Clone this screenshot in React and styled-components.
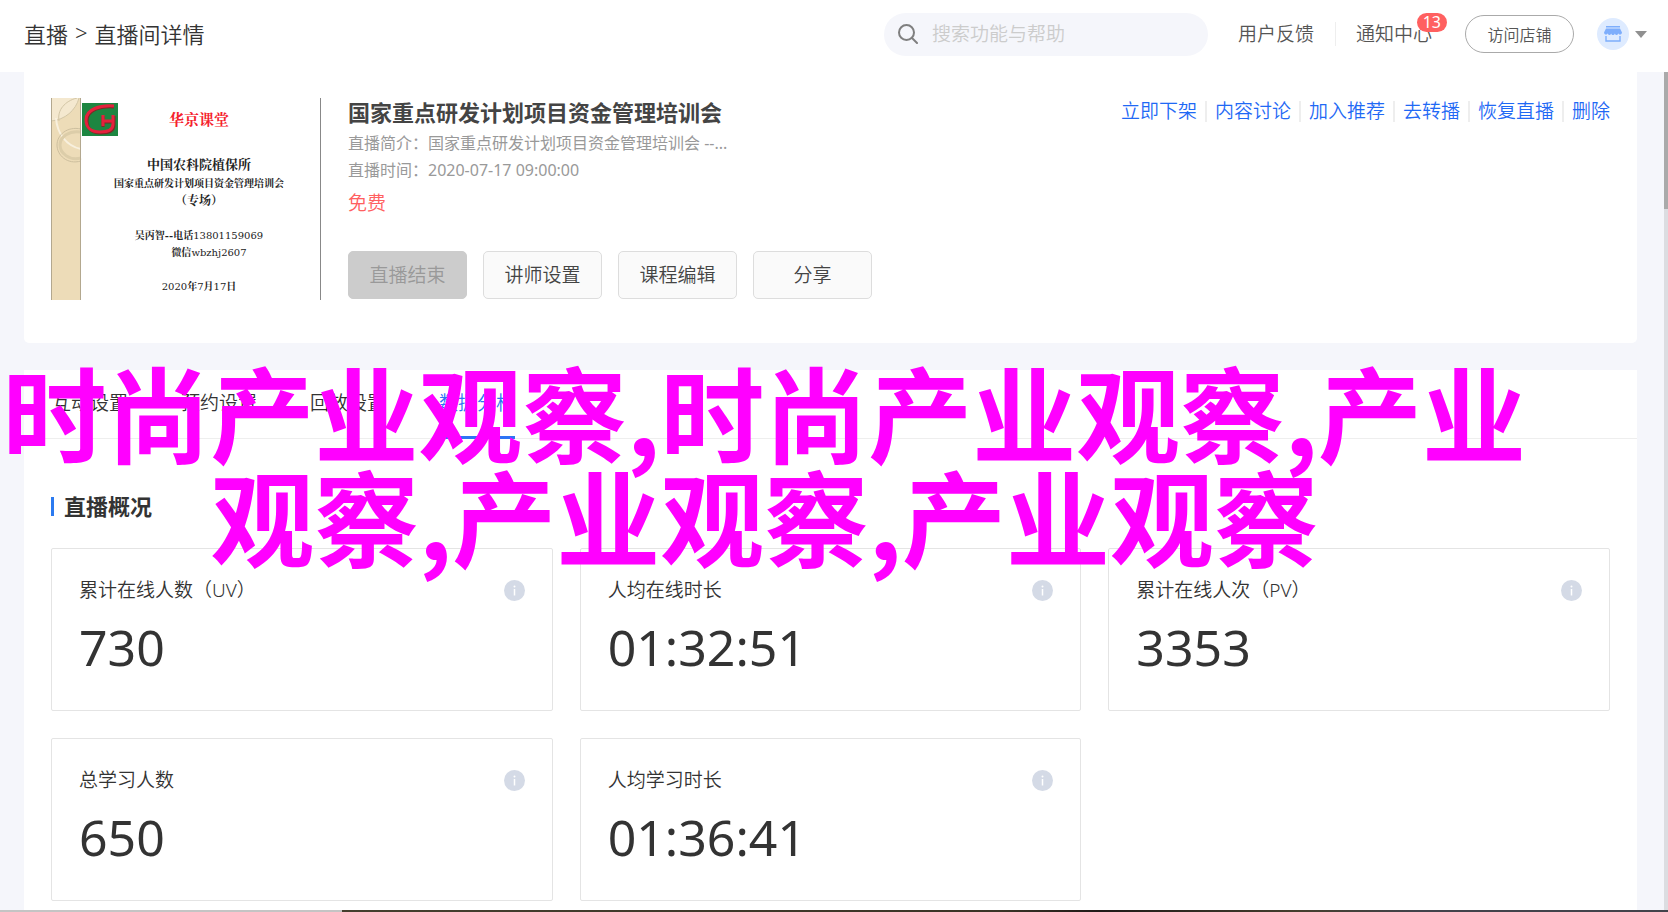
import React from "react";
import styled, { createGlobalStyle } from "styled-components";

const navTabs = ["互动设置", "预约设置", "回放设置", "数据分析"];

const actions = ["立即下架", "内容讨论", "加入推荐", "去转播", "恢复直播", "删除"];

const stats = [
  { label: "累计在线人数（UV）", value: "730" },
  { label: "人均在线时长", value: "01:32:51" },
  { label: "累计在线人次（PV）", value: "3353" },
  { label: "总学习人数", value: "650" },
  { label: "人均学习时长", value: "01:36:41" },
];

const SearchIcon = () => (
  <svg width="20" height="20" viewBox="0 0 20 20" fill="none" stroke="#7f7f7f" strokeWidth="2">
    <circle cx="8.500" cy="8.500" r="7.500" />
    <path d="M14 14l5 5" strokeLinecap="round" />
  </svg>
);

const ShopIcon = () => (
  <svg width="18" height="16" viewBox="0 0 18 16">
    <path d="M2 0h14v1.500H2z" fill="#7eaefc" />
    <path
      d="M2 2.500h14l2 4c0 2-3 3-3.600.8C14 9.500 11.400 9.500 10.800 7.500 10.200 9.500 7.800 9.500 7.200 7.500 6.600 9.500 4 9.500 3.600 7.300 3 9.500 0 8.500 0 6.500z"
      fill="#7eaefc"
    />
    <path d="M2 10v5h14v-5" fill="none" stroke="#7eaefc" strokeWidth="1.400" />
  </svg>
);

const InfoIcon = () => (
  <svg width="21" height="21" viewBox="0 0 21 21">
    <circle cx="10.500" cy="10.500" r="10.500" fill="#d4dae6" />
    <circle cx="10.500" cy="6.500" r="1" fill="#fff" />
    <path d="M10.500 9v6.500" stroke="#fff" strokeWidth="1.500" />
  </svg>
);

const CoverStrip = () => (
  <svg width="31" height="202" viewBox="0 0 31 202">
    <rect width="30" height="202" fill="#eddcb8" />
    <path d="M0 0h28C25 12 14 22 0 23z" fill="#f4e8cf" />
    <path d="M28 0C25 12 14 22 0 23M8 23C6 12 14 3 26 0" fill="none" stroke="#d3c6a6" />
    <path d="M5 20c1 15 10 28 25 31" fill="none" stroke="#f8f0de" strokeWidth="2" />
    <path d="M30 31C16 28 6 37 6 47s10 20 24 16" fill="none" stroke="#cdbf9e" />
    <path d="M30 34C18 32 9 39 9 47s9 16 21 13" fill="none" stroke="#dccda9" strokeWidth="3" />
    <path d="M0.500 0v202M29.500 0v202" stroke="#b3a88f" />
  </svg>
);

const CoverLogo = () => (
  <svg width="36" height="33" viewBox="0 0 36 33">
    <rect width="36" height="33" fill="#1d8641" />
    <path
      d="M32 4C18 3 5 7 5 18c0 8 6 12 14 12 9 0 13-3 13-8V13M21 13v11M21 19h11"
      fill="none"
      stroke="#7c2a26"
      strokeWidth="3"
    />
    <path
      d="M32 3C18 2 4 6 4 17c0 8 6 12 14 12 9 0 13-3 13-8V12M21 12v11M21 18h11"
      fill="none"
      stroke="#e5213c"
      strokeWidth="3"
    />
  </svg>
);

const App = () => {
  return (
    <>
      <GlobalStyle />
      <Page>
        <Header>
          <Breadcrumb>
            <a href="#live">直播</a>
            <span>&gt;</span>
            <span>直播间详情</span>
          </Breadcrumb>
          <Search>
            <SearchIcon />
            <input type="text" placeholder="搜索功能与帮助" aria-label="搜索功能与帮助" />
          </Search>
          <TopLinks>
            <a href="#feedback">用户反馈</a>
            <a href="#notice">
              通知中心
              <Badge>13</Badge>
            </a>
          </TopLinks>
          <VisitButton type="button">访问店铺</VisitButton>
          <Account type="button" aria-label="店铺账号">
            <Avatar>
              <ShopIcon />
            </Avatar>
            <Caret />
          </Account>
        </Header>

        <Content>
          <Main>
            <Course>
              <Cover>
                <CoverStrip />
                <CoverLogo />
                <CoverText>
                  <h2>华京课堂</h2>
                  <h3>中国农科院植保所</h3>
                  <p>国家重点研发计划项目资金管理培训会</p>
                  <h4>（专场）</h4>
                  <CoverContact>
                    <b>吴丙智--电话</b>13801159069
                    <br />
                    &emsp;&emsp;<b>微信</b>wbzhj2607
                  </CoverContact>
                  <CoverDate>
                    2020<b>年</b>7<b>月</b>17<b>日</b>
                  </CoverDate>
                </CoverText>
              </Cover>
              <CourseInfo>
                <h1>国家重点研发计划项目资金管理培训会</h1>
                <Meta>直播简介：国家重点研发计划项目资金管理培训会 --...</Meta>
                <Meta>直播时间：2020-07-17 09:00:00</Meta>
                <Price>免费</Price>
                <ButtonRow>
                  <Button type="button" disabled>
                    直播结束
                  </Button>
                  <Button type="button">讲师设置</Button>
                  <Button type="button">课程编辑</Button>
                  <Button type="button">分享</Button>
                </ButtonRow>
              </CourseInfo>
              <Actions>
                {actions.map((item) => (
                  <a href="#action" key={item}>
                    {item}
                  </a>
                ))}
              </Actions>
            </Course>

            <Panel>
              <Tabs>
                {navTabs.map((tab, i) => (
                  <Tab type="button" key={tab} $active={i === 3}>
                    {tab}
                  </Tab>
                ))}
              </Tabs>
              <SectionTitle>直播概况</SectionTitle>
              <StatGrid>
                {stats.map(({ label, value }) => (
                  <StatCard key={label}>
                    <StatLabel>
                      {label}
                      <InfoIcon />
                    </StatLabel>
                    <StatValue>{value}</StatValue>
                  </StatCard>
                ))}
              </StatGrid>
            </Panel>
          </Main>
          <ScrollTrack>
            <ScrollThumb />
          </ScrollTrack>
        </Content>
        <BottomBar />
        <Caption>时尚产业观察,时尚产业观察,产业观察,产业观察,产业观察</Caption>
      </Page>
    </>
  );
};

const GlobalStyle = createGlobalStyle`
  * {
    box-sizing: border-box;
    margin: 0;
    padding: 0;
  }

  body {
    background: #f5f6fb;
    color: #333;
    font-family: "Noto Sans", "Noto Sans CJK SC", sans-serif;
    font-weight: 350;
    overflow: hidden;
  }

  a {
    color: inherit;
    text-decoration: none;
  }

  button,
  input {
    font: inherit;
    color: inherit;
  }

  button {
    cursor: pointer;
  }

  svg {
    flex: none;
    display: block;
  }
`;

const Page = styled.div`
  position: relative;
  display: flex;
  flex-direction: column;
  height: 100vh;
`;

const Header = styled.header`
  display: flex;
  align-items: center;
  flex: none;
  height: 72px;
  padding: 0 21px 4px 24px;
  background: #fff;
  color: #555;
`;

const Breadcrumb = styled.nav`
  display: flex;
  gap: 7px;
  margin-right: auto;
  padding-bottom: 2px;
  font-size: 22px;
  color: #333;
`;

const Search = styled.label`
  display: flex;
  align-items: center;
  gap: 14px;
  width: 324px;
  height: 43px;
  padding: 0 14px;
  border-radius: 22px;
  background: #f5f6fb;

  input {
    flex: 1;
    min-width: 0;
    border: 0;
    outline: 0;
    background: none;
    font-size: 19px;
  }

  input::placeholder {
    color: #ccc;
  }
`;

const TopLinks = styled.nav`
  display: flex;
  align-items: center;
  margin: 0 12px 0 10px;
  font-size: 19px;

  a {
    position: relative;
    padding: 0 21px 0 20px;
    line-height: 24px;
  }

  a + a {
    border-left: 1px solid #eee;
  }
`;

const Badge = styled.span`
  position: absolute;
  top: -9px;
  right: 6px;
  padding: 0 6px;
  border-radius: 10px;
  background: #ff6060;
  color: #fff;
  font-size: 16px;
  font-weight: 400;
  line-height: 19px;
`;

const VisitButton = styled.button`
  width: 109px;
  height: 38px;
  border: 1px solid #aaa;
  border-radius: 19px;
  background: #fff;
  font-size: 16px;
`;

const Account = styled.button`
  display: flex;
  align-items: center;
  gap: 6px;
  margin-left: 23px;
  border: 0;
  background: none;
`;

const Avatar = styled.span`
  display: flex;
  align-items: center;
  justify-content: center;
  width: 32px;
  height: 32px;
  border-radius: 50%;
  background: #deebff;
`;

const Caret = styled.span`
  border: 6px solid transparent;
  border-top: 7px solid #909090;
  border-bottom: 0;
`;

const Content = styled.div`
  display: flex;
  flex: 1;
  min-height: 0;
`;

const Main = styled.main`
  display: flex;
  flex-direction: column;
  gap: 27px;
  flex: 1;
  min-width: 0;
  padding: 0 27px 0 24px;
`;

const Course = styled.section`
  display: flex;
  flex: none;
  padding: 26px 27px 43px;
  border-radius: 0 0 5px 5px;
  background: #fff;
`;

const Cover = styled.div`
  display: flex;
  width: 270px;
  height: 202px;
  margin-right: 27px;
  border-right: 1px solid #888;
  font-family: "Liberation Serif", "Noto Serif CJK SC", "Noto Sans CJK SC", serif;

  > svg + svg {
    margin-top: 5px;
  }
`;

const CoverText = styled.div`
  display: flex;
  flex-direction: column;
  align-items: center;
  width: 180px;
  flex: none;
  margin-left: -9px;
  padding-top: 11px;
  color: #222;
  font-size: 10px;
  font-weight: 700;
  line-height: 17px;
  white-space: nowrap;

  h2 {
    margin-bottom: 24px;
    color: #f5222d;
    font-size: 15px;
    line-height: 22px;
  }

  h3 {
    font-size: 13px;
    line-height: 20px;
  }

  h4 {
    font-size: 12px;
    line-height: 18px;
  }
`;

const CoverDate = styled.p`
  font-family: "DejaVu Serif", "Noto Serif CJK SC", serif;
  font-weight: 400;
`;

const CoverContact = styled(CoverDate)`
  margin: 17px 0;
  text-align: center;
`;

const CourseInfo = styled.div`
  h1 {
    margin-bottom: 4px;
    color: #444;
    font-size: 22px;
    line-height: 28px;
  }
`;

const Meta = styled.p`
  color: #999;
  font-size: 16px;
  font-weight: 400;
  line-height: 27px;
`;

const Price = styled.p`
  margin-bottom: 28px;
  color: #ff6060;
  font-size: 19px;
  line-height: 39px;
`;

const ButtonRow = styled.div`
  display: flex;
  gap: 16px;
`;

const Button = styled.button`
  width: 119px;
  height: 48px;
  padding-bottom: 2px;
  border: 1px solid #ddd;
  border-radius: 5px;
  background: #fafafa;
  color: #444;
  font-size: 19px;

  &:disabled {
    border-color: #ccc;
    background: #ccc;
    color: #999;
  }
`;

const Actions = styled.nav`
  display: flex;
  align-self: flex-start;
  margin: 3px 0 0 auto;
  color: #1f69f5;
  font-size: 19px;
  line-height: 21px;

  a + a {
    margin-left: 8px;
    padding-left: 8px;
    border-left: 2px solid #eee;
  }
`;

const Panel = styled.section`
  flex: 1;
  min-height: 0;
  background: #fff;
`;

const Tabs = styled.div`
  display: flex;
  gap: 53px;
  height: 69px;
  padding: 0 28px;
  border-bottom: 1px solid #eee;
`;

const Tab = styled.button`
  height: 69px;
  padding-bottom: 2px;
  border: 0;
  border-bottom: 3px solid ${({ $active }) => ($active ? "#2d74f5" : "transparent")};
  background: none;
  color: ${({ $active }) => ($active ? "#2d74f5" : "#333")};
  font-size: 19px;
`;

const SectionTitle = styled.h2`
  display: flex;
  align-items: center;
  gap: 10px;
  margin: 51px 27px 26px;
  font-size: 22px;
  line-height: 32px;

  &::before {
    content: "";
    width: 3px;
    height: 19px;
    background: #2b7af0;
  }
`;

const StatGrid = styled.div`
  display: grid;
  grid-template-columns: repeat(3, 1fr);
  gap: 27px;
  padding: 0 27px;
`;

const StatCard = styled.article`
  height: 163px;
  padding: 28px 27px 0;
  border: 1px solid #e4e4e4;
  border-radius: 2px;
`;

const StatLabel = styled.h3`
  display: flex;
  align-items: center;
  justify-content: space-between;
  font-size: 19px;
  font-weight: 350;
  line-height: 27px;
`;

const StatValue = styled.p`
  font-size: 50px;
  font-weight: 400;
  line-height: 87px;
`;

const ScrollTrack = styled.div`
  width: 4px;
  background: #dcdde1;
`;

const ScrollThumb = styled.div`
  height: 137px;
  background: #aaa;
`;

const BottomBar = styled.div`
  flex: none;
  height: 2px;
  background: linear-gradient(90deg, #c4c4c4 20.500%, #443f2e 20.500%, #3a3426 60%, #201a18 66%, #453f2e 78%, #43434b 85%);
`;

const Caption = styled.p`
  position: absolute;
  top: 359px;
  left: 0;
  width: 92%;
  padding-right: 6px;
  color: #f0f;
  font-family: "Noto Sans CJK SC", sans-serif;
  font-size: 104px;
  font-weight: 700;
  line-height: 104px;
  text-align: center;
  pointer-events: none;
`;

export default App;
